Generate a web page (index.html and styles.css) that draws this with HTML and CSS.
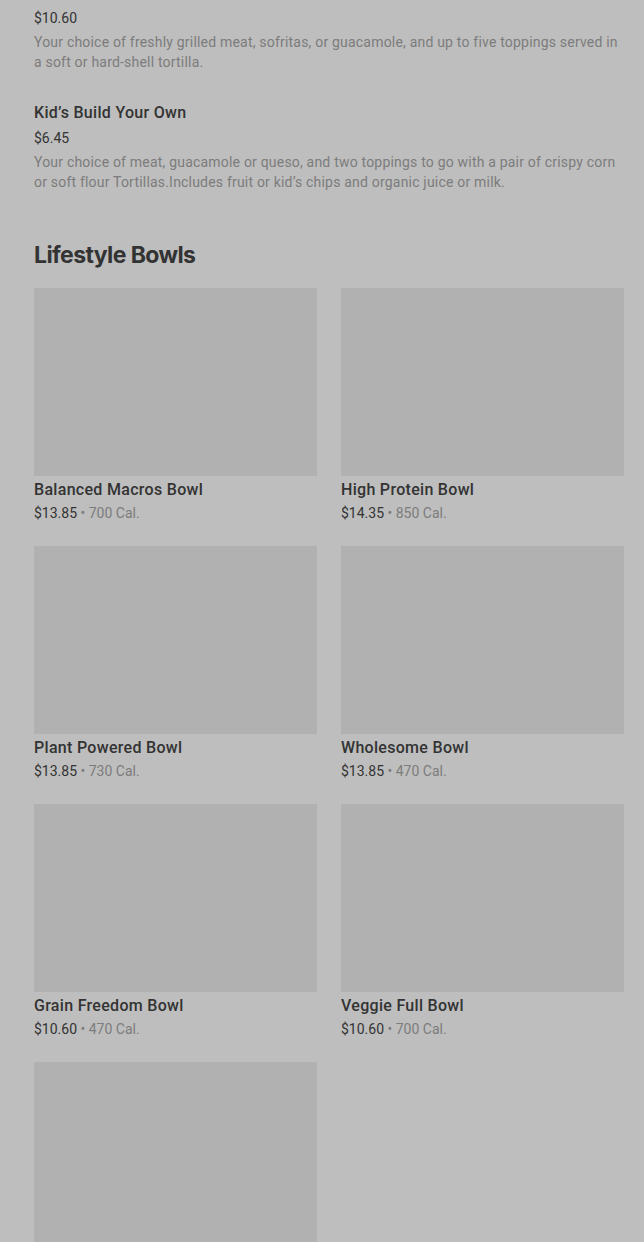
FILE: index.html
```html
<!DOCTYPE html>
<html lang="en">
<head>
    <meta charset="UTF-8">
    <meta name="viewport" content="width=device-width, initial-scale=1.0">
    <title>Menu</title>
    <link rel="stylesheet" href="styles.css">
</head>
<body>

    <div class="page">
        <div class="item">
            <h3 class="item-name">Build Your Own</h3>
            <div class="item-price">$10.60</div>
            <p class="item-desc">Your choice of freshly grilled meat, sofritas, or guacamole, and up to five toppings served in a soft or hard-shell tortilla.</p>
        </div>

        <div class="item">
            <h3 class="item-name">Kid’s Build Your Own</h3>
            <div class="item-price">$6.45</div>
            <p class="item-desc">Your choice of meat, guacamole or queso, and two toppings to go with a pair of crispy corn or soft flour Tortillas.Includes fruit or kid’s chips and organic juice or milk.</p>
        </div>

        <h2 class="section-title">Lifestyle Bowls</h2>

        <div class="grid">
            <div class="card">
                <div class="card-img"></div>
                <div class="card-name">Balanced Macros Bowl</div>
                <div class="card-meta">$13.85 <span class="cal">• 700 Cal.</span></div>
            </div>
            <div class="card">
                <div class="card-img"></div>
                <div class="card-name">High Protein Bowl</div>
                <div class="card-meta">$14.35 <span class="cal">• 850 Cal.</span></div>
            </div>
            <div class="card">
                <div class="card-img"></div>
                <div class="card-name">Plant Powered Bowl</div>
                <div class="card-meta">$13.85 <span class="cal">• 730 Cal.</span></div>
            </div>
            <div class="card">
                <div class="card-img"></div>
                <div class="card-name">Wholesome Bowl</div>
                <div class="card-meta">$13.85 <span class="cal">• 470 Cal.</span></div>
            </div>
            <div class="card">
                <div class="card-img"></div>
                <div class="card-name">Grain Freedom Bowl</div>
                <div class="card-meta">$10.60 <span class="cal">• 470 Cal.</span></div>
            </div>
            <div class="card">
                <div class="card-img"></div>
                <div class="card-name">Veggie Full Bowl</div>
                <div class="card-meta">$10.60 <span class="cal">• 700 Cal.</span></div>
            </div>
            <div class="card">
                <div class="card-img"></div>
            </div>
        </div>
    </div>

</body>
</html>
```

FILE: styles.css
```css
/* page */
body {
    margin: 0;
    font-family: Roboto, "Noto Sans", sans-serif;
    background-color: #bebebe;
    color: #2e2e2e;
    overflow: hidden;
}
.page {
    margin-top: -19px;
    padding: 0 20px 0 34px;
}

/* list items */
.item {
    padding-bottom: 29px;
}
.item-name {
    margin: 0 0 1px;
    font-size: 16px;
    font-weight: 500;
    line-height: 24px;
    letter-spacing: 0.3px;
    color: #333;
}
.item-price {
    font-size: 14px;
    line-height: 24px;
    color: #333;
}
.item-desc {
    margin: 2px 0 0;
    font-size: 14px;
    line-height: 20px;
    letter-spacing: 0.2px;
    color: #7c7c7c;
}

.section-title {
    margin: 18px 0 17px;
    font-family: Inter, Roboto, sans-serif;
    font-size: 23px;
    font-weight: 700;
    line-height: 32px;
    color: #333;
    letter-spacing: -0.6px;
}

/* bowls grid */
.grid {
    display: grid;
    grid-template-columns: 1fr 1fr;
    column-gap: 24px;
    row-gap: 23px;
}
.card-img {
    height: 188px;
    background-color: #b1b1b1;
}
.card-name {
    margin-top: 4px;
    font-size: 16px;
    font-weight: 500;
    line-height: 20px;
    letter-spacing: 0.3px;
    color: #333;
}
.card-meta {
    margin-top: 3px;
    font-size: 14px;
    line-height: 20px;
    color: #333;
}
.cal {
    color: #7c7c7c;
}
```
